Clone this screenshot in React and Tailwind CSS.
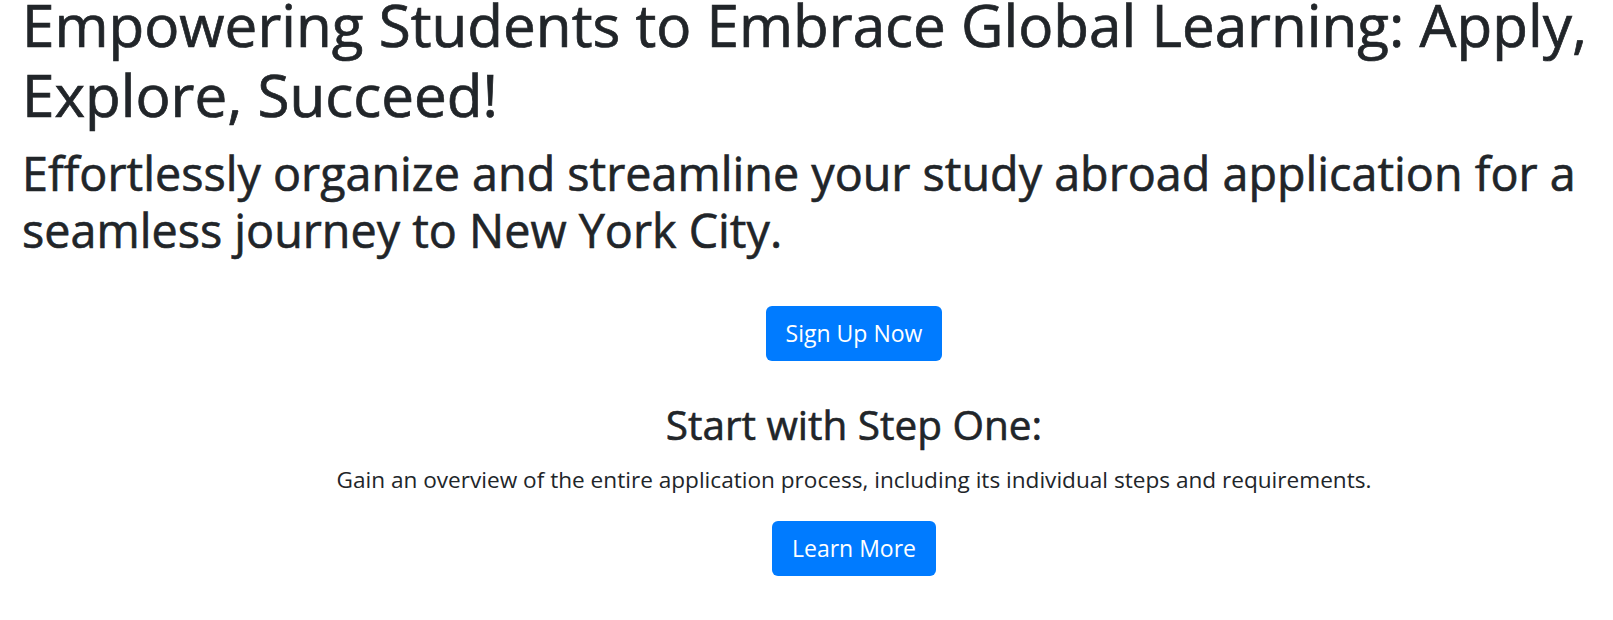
export default function App() {
  return (
    <div className="min-h-screen overflow-hidden bg-white font-['Open_Sans',sans-serif] text-[#212529]">
      {/* Hero heading */}
      <section className="pl-[22px] pr-[12px]">
        <h1 className="-mt-[10px] text-[58.4px] font-normal leading-[70px] [-webkit-text-stroke:0.7px_#212529]">
          Empowering Students to Embrace Global Learning: Apply, Explore, Succeed!
        </h1>
        <h2 className="mt-[15px] text-[46.7px] font-normal leading-[57px] [-webkit-text-stroke:0.6px_#212529]">
          Effortlessly organize and streamline your study abroad application for a seamless journey to New York City.
        </h2>
      </section>

      {/* Calls to action */}
      <section className="flex flex-col items-center pl-[95px] text-center">
        <a
          href="#"
          className="mt-[47px] flex h-[55px] items-center rounded-[6px] bg-[#007bff] px-[20px] text-[23px] text-white"
        >
          Sign Up Now
        </a>
        <h3 className="mt-[40px] text-[40.5px] font-normal leading-[48px] [-webkit-text-stroke:0.6px_#212529]">
          Start with Step One:
        </h3>
        <p className="mt-[14px] text-[22.6px] leading-[33px]">
          Gain an overview of the entire application process, including its individual steps and requirements.
        </p>
        <a
          href="#"
          className="mt-[25px] flex h-[55px] items-center rounded-[6px] bg-[#007bff] px-[20px] text-[23px] text-white"
        >
          Learn More
        </a>
      </section>
    </div>
  );
}
